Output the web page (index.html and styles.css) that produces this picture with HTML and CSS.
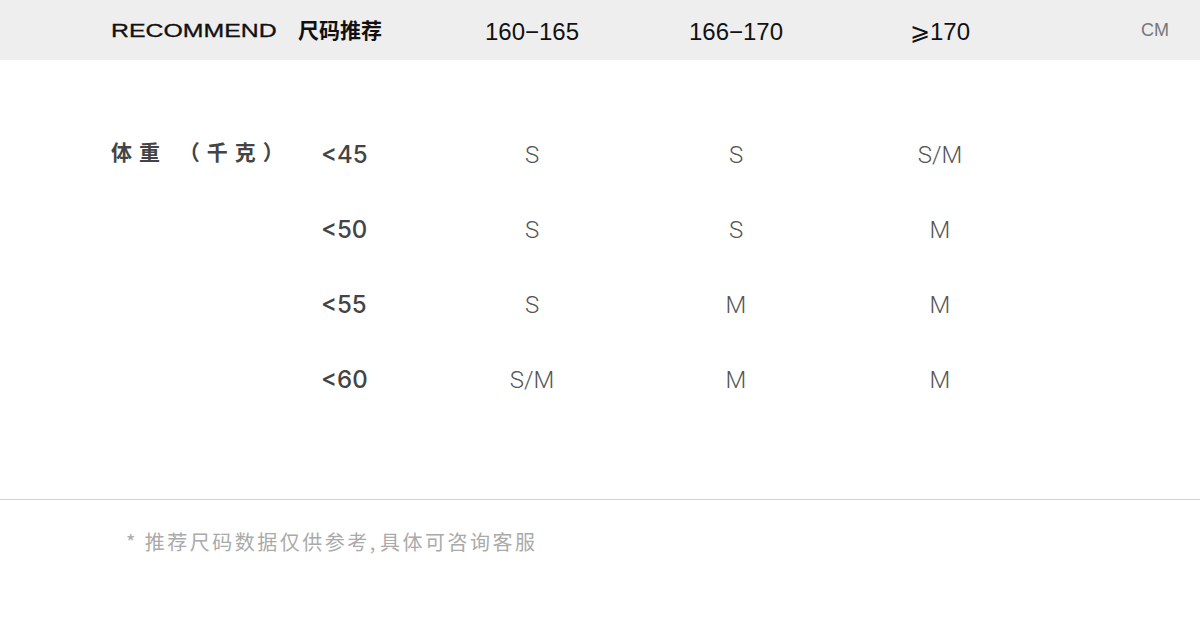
FILE: index.html
```html
<!DOCTYPE html>
<html lang="zh">
<head>
<meta charset="utf-8">
<link rel="stylesheet" href="styles.css">
</head>
<body>
<div class="page">
  <header class="head">
    <div class="brand"><span class="brand-text">RECOMMEND</span></div>
    <div class="title">尺码推荐</div>
    <div class="hcol">160−165</div>
    <div class="hcol">166−170</div>
    <div class="hcol">⩾170</div>
    <div class="unit">CM</div>
  </header>
  <section class="table">
    <div class="weight">体重 （千克）</div>
    <div class="rows">
      <div class="row"><div class="rlabel">&lt;45</div><div class="cell">S</div><div class="cell">S</div><div class="cell">S/M</div></div>
      <div class="row"><div class="rlabel">&lt;50</div><div class="cell">S</div><div class="cell">S</div><div class="cell">M</div></div>
      <div class="row"><div class="rlabel">&lt;55</div><div class="cell">S</div><div class="cell">M</div><div class="cell">M</div></div>
      <div class="row"><div class="rlabel">&lt;60</div><div class="cell">S/M</div><div class="cell">M</div><div class="cell">M</div></div>
    </div>
  </section>
  <hr class="divider">
  <p class="note">* 推荐尺码数据仅供参考,<span class="gap"></span>具体可咨询客服</p>
</div>
</body>
</html>
```
FILE: styles.css
```css
* { box-sizing: border-box; }
html, body { margin: 0; padding: 0; background: #fff; }
body { font-family: "Liberation Sans", Arial, "Noto Sans CJK SC", sans-serif; }
.page { width: 1200px; height: 624px; overflow: hidden; }

.head {
  height: 60px;
  background: #eeeeee;
  display: grid;
  grid-template-columns: 187px 132px 204px 204px 204px 1fr;
  align-items: center;
  padding-left: 111px;
  color: #111;
}
.brand { height: 20px; overflow: visible; }
.brand-text {
  display: inline-block;
  font-size: 18px;
  line-height: 20px;
  transform: scaleX(1.38);
  transform-origin: left center;
  color: #111;
  -webkit-text-stroke: 0.3px #111;
}
.title {
  font-family: "Noto Sans CJK SC", sans-serif;
  font-weight: 700;
  font-size: 21px;
  line-height: 60px;
  margin-top: -4px;
}
.hcol {
  text-align: center;
  font-size: 24px;
  line-height: 60px;
  margin-top: 2px;
}
.unit {
  text-align: right;
  padding-right: 31px;
  font-size: 18px;
  color: #777;
  margin-top: -2px;
}

.table {
  display: flex;
  padding: 57px 0 0 111px;
  height: 439px;
}
.weight {
  width: 212px;
  font-family: "Noto Sans CJK SC", sans-serif;
  font-weight: 700;
  font-size: 21px;
  letter-spacing: 7px;
  color: #444;
  line-height: 24px;
  padding-top: 22px;
  white-space: nowrap;
}
.rows { display: flex; flex-direction: column; }
.row {
  display: grid;
  grid-template-columns: 107px 204px 204px 204px;
  height: 75px;
  align-items: center;
}
.rlabel {
  font-family: Inter, sans-serif;
  font-size: 24px;
  color: #444;
  font-weight: 500;
  margin-left: -2px;
}
.cell {
  font-family: Roboto, sans-serif;
  text-align: center;
  font-size: 24px;
  font-weight: 300;
  color: #555;
}

.divider {
  margin: 0;
  border: 0;
  border-top: 1px solid #d4d4d4;
}
.note {
  margin: 27px 0 0 126px;
  font-family: "Noto Sans CJK SC", sans-serif;
  font-size: 20px;
  letter-spacing: 2.5px;
  color: #aaa;
  line-height: 30px;
}
.gap { display: inline-block; width: 2px; }
```
